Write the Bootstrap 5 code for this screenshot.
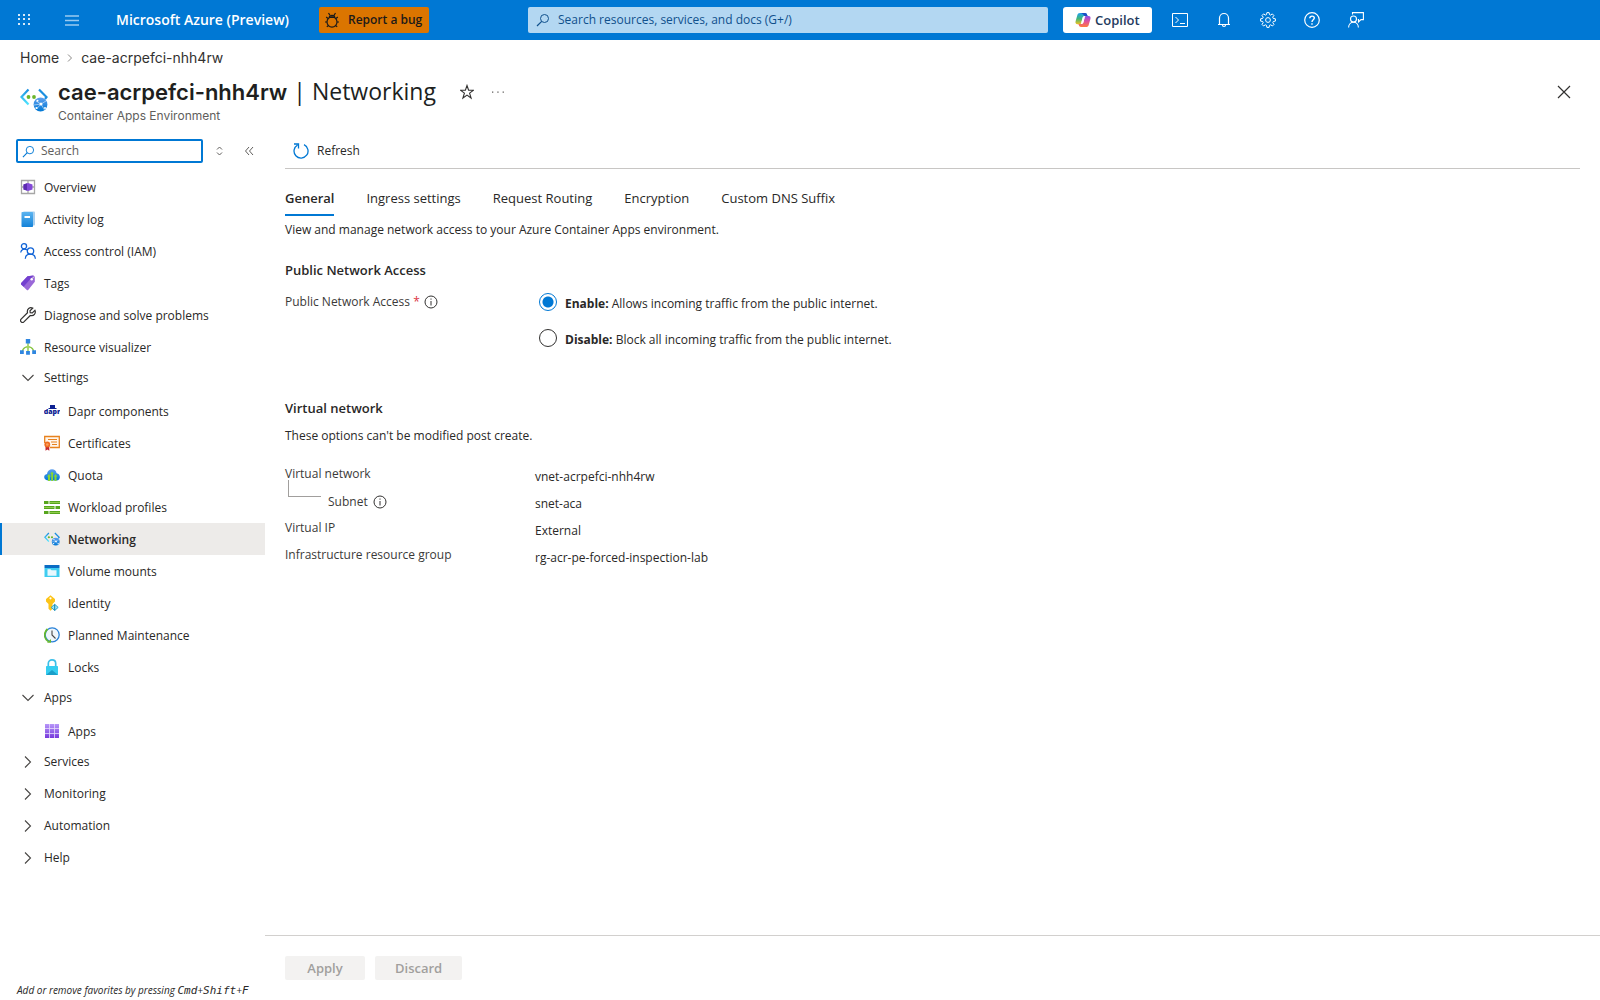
<!DOCTYPE html>
<html lang="en">
<head>
<meta charset="utf-8">
<meta name="viewport" content="width=device-width, initial-scale=1">
<title>cae-acrpefci-nhh4rw | Networking - Microsoft Azure</title>
<link href="https://cdn.jsdelivr.net/npm/bootstrap@5.3.0/dist/css/bootstrap.min.css" rel="stylesheet">
<style>
  body { font-family: "Open Sans", "Noto Sans", sans-serif; font-size: 12px; line-height: 20px; color: #292827; }
  svg { display: block; flex: none; }
  button { color: inherit; }
  .sf { font-family: Inter, "Liberation Sans", sans-serif; }
  .plain { background: none; border: 0; padding: 0; }

  .topbar { background: #0078d4; height: 40px; color: #fff; }
  .topbar-start { flex: 0 0 33%; padding-left: 17px; }
  .brand { font-size: 14px; font-weight: 600; color: #fff; margin-left: 36px; }
  .bug-btn { background: #db7500; color: #1b1a19; font-size: 12px; font-weight: 600; height: 26px; border-radius: 2px; padding: 0 7px 0 5px; margin-left: 30px; gap: 8px; }
  .global-search { flex: 0 0 32.5%; height: 26px; background: #b3d7f2; border-radius: 2px; padding: 0 8px; color: #10508c; gap: 8px; }
  .global-search input, .menu-search input { background: none; border: 0; outline: 0; min-width: 0; padding: 0; }
  .global-search input::placeholder { color: #10508c; opacity: 1; }
  .copilot-btn { background: #fff; color: #243a5e; font-size: 13px; font-weight: 600; height: 26px; border-radius: 3px; padding: 0 12px; gap: 4px; margin-left: 15px; }
  .tool-icons { margin-left: 20px; gap: 28px; }

  .crumbs { padding: 8px 20px 0; font-size: 14px; }
  .crumbs a { color: #323130; text-decoration: none; }
  .blade-head { padding: 7px 29px 0 20px; }
  .blade-title { font-size: 23px; line-height: 32px; font-weight: 400; color: #201f1e; }
  .blade-title b { font-size: 22px; font-weight: 600; }
  .blade-sub { line-height: 16px; color: #605e5c; }
  .title-icon { padding-top: 13px; width: 38px; }

  .side { flex: 0 0 265px; min-width: 0; }
  .menu-tools { height: 24px; margin: 15px 0 8px 16px; }
  .menu-search { width: 187px; height: 24px; border: 2px solid #0078d4; border-radius: 2px; padding: 0 4px; gap: 6px; }
  .menu-search svg { color: #0078d4; }
  .menu-search input::placeholder { color: #605e5c; opacity: 1; }
  .menu { padding: 0; margin: 0; list-style: none; }
  .menu-link { display: flex; align-items: center; gap: 8px; width: 100%; height: 32px; color: #292827; text-decoration: none; padding: 0 0 0 20px; border: 0; background: none; text-align: left; }
  .menu-link span { padding-top: 2px; }
  .menu-link.group { padding-bottom: 2px; }
  .menu-link.group span { padding-top: 0; }
  .menu-sub .menu-link { padding-left: 44px; }
  .menu-sub .menu-link.current { background: #edebe9; border-left: 2px solid #0078d4; padding-left: 42px; font-weight: 600; }
  .fav-hint { font-size: 10px; line-height: 16px; font-style: italic; padding: 0 0 1px 17px; }
  .fav-hint kbd { font-family: "DejaVu Sans Mono", monospace; font-size: 11px; background: none; color: inherit; padding: 0; }

  .content-pad { padding: 0 20px; }
  .cmdbar { border-bottom: 1px solid #c8c6c4; padding: 17px 8px 7px; }
  .pane-tabs { gap: 32px; margin: 0; padding: 15px 0 0; list-style: none; font-size: 13px; }
  .pane-tabs button { display: block; height: 32px; padding: 0 0 3px; border: 0; border-bottom: 2px solid transparent; background: none; }
  .pane-tabs button.active { font-weight: 600; border-bottom-color: #0078d4; }
  .section-h { font-size: 13px; line-height: 20px; font-weight: 600; margin: 0; }
  .section-gap { margin-top: 42px; }
  .field-label { flex: 0 0 254px; color: #3b3a39; }
  .choice { display: flex; align-items: center; gap: 8px; height: 36px; }
  .choice input { appearance: none; width: 18px; height: 18px; margin: 0; border: 1px solid #323130; border-radius: 50%; flex: none; }
  .choice input:checked { border-color: #0078d4; background: radial-gradient(circle, #0078d4 5px, transparent 6px); }
  .choice label { padding-top: 3px; }
  .choice b { font-weight: 700; }
  .props { display: grid; grid-template-columns: 250px auto; grid-auto-rows: 27px; margin: 17px 0 0; }
  .props dt { font-weight: 400; color: #3b3a39; padding-top: 1px; }
  .props dd { margin: 0; padding-top: 4px; }
  .props .nested { display: flex; gap: 5px; align-items: center; height: 22px; position: relative; padding-left: 43px; }
  .props .nested::before { content: ""; position: absolute; left: 3px; top: -10px; width: 33px; height: 17px; border: 1px solid #a19f9d; border-width: 0 0 1px 1px; }
  .foot { border-top: 1px solid #d2d0ce; padding: 20px; height: 65px; gap: 10px; font-size: 13px; }
  .foot button { height: 24px; min-width: 80px; padding: 0 20px; border: 0; border-radius: 2px; background: #f3f2f1; color: #a19f9d; font-weight: 600; }
</style>
</head>
<body class="d-flex flex-column min-vh-100">
<svg width="0" height="0" class="position-absolute" aria-hidden="true">
  <defs>
    <linearGradient id="gBlue" x1="0" y1="0" x2="0" y2="1"><stop offset="0" stop-color="#5ea0ef"/><stop offset="1" stop-color="#0078d4"/></linearGradient>
    <linearGradient id="gBook" x1="0" y1="0" x2="0" y2="1"><stop offset="0" stop-color="#5bb4f0"/><stop offset="1" stop-color="#1482d8"/></linearGradient>
    <linearGradient id="gPurple" x1="0" y1="0" x2="0" y2="1"><stop offset="0" stop-color="#b796f9"/><stop offset="1" stop-color="#773adc"/></linearGradient>
    <linearGradient id="gLeft" x1="0" y1="0" x2="0" y2="1"><stop offset="0" stop-color="#1b8fe0"/><stop offset="1" stop-color="#50e6ff"/></linearGradient>
    <linearGradient id="gCopA" x1="0" y1="0" x2="0" y2="1"><stop offset="0" stop-color="#1fa0f0"/><stop offset=".5" stop-color="#3fb67a"/><stop offset="1" stop-color="#f0c020"/></linearGradient>
    <linearGradient id="gCopB" x1="0" y1="0" x2="0" y2="1"><stop offset="0" stop-color="#8a4fe8"/><stop offset=".5" stop-color="#e0509a"/><stop offset="1" stop-color="#ff7a3c"/></linearGradient>
  </defs>
  <symbol id="i-net" viewBox="0 0 28 24">
    <path d="M8.500 1.500 1.500 9l7 7.500" fill="none" stroke="url(#gLeft)" stroke-width="2.200"/>
    <path d="M19 1.500 26.500 9l-1.500 2" fill="none" stroke="#1b8fe0" stroke-width="2.200"/>
    <circle cx="8.500" cy="9" r="1.900" fill="#6bb52b"/><circle cx="14" cy="9" r="1.900" fill="#6bb52b"/>
    <circle cx="20.500" cy="16.500" r="6.900" fill="url(#gBlue)"/>
    <path d="M16 13l5 3 5-3M21 16l-4.500 5M21 16l3.500 6M14 17l7-1" fill="none" stroke="#fff" stroke-width=".7" opacity=".7"/>
    <circle cx="21" cy="16" r="1.500" fill="#fff"/><circle cx="16.500" cy="20" r="1.100" fill="#fff"/><circle cx="17.500" cy="12.800" r="1" fill="#fff"/><circle cx="25" cy="20" r="1" fill="#fff"/>
  </symbol>
  <symbol id="i-glass" viewBox="0 0 14 14"><circle cx="8.500" cy="5.500" r="4" fill="none" stroke="currentColor"/><path d="M5.700 8.300 1 13" stroke="currentColor" stroke-width="1.200"/></symbol>
  <symbol id="i-down" viewBox="0 0 16 16"><path d="M2.500 5 8 10.500 13.500 5" fill="none" stroke="#484644" stroke-width="1.100"/></symbol>
  <symbol id="i-right" viewBox="0 0 16 16"><path d="M5 2.500 10.500 8 5 13.500" fill="none" stroke="#484644" stroke-width="1.100"/></symbol>
  <symbol id="i-info" viewBox="0 0 14 14"><circle cx="7" cy="7" r="6" fill="none" stroke="#323130"/><path d="M7 6v4.500M7 3.500v1.200" stroke="#323130"/></symbol>
</svg>

<header class="topbar d-flex align-items-center">
  <div class="topbar-start d-flex align-items-center">
    <button class="plain" aria-label="App launcher"><svg width="14" height="14" viewBox="0 0 14 14" fill="#d6e9f8"><path d="M1 1h2v2H1zM6 1h2v2H6zM11 1h2v2h-2zM1 5h2v2H1zM6 5h2v2H6zM11 5h2v2h-2zM1 10h2v2H1zM6 10h2v2H6zM11 10h2v2h-2z"/></svg></button>
    <button class="plain ms-4 ps-2" aria-label="Show portal menu"><svg width="17" height="14" viewBox="0 0 17 14"><path d="M2 3h14M2 7.500h14M2 12h14" stroke="#9bcaf0" stroke-width="1.500"/></svg></button>
    <a class="brand text-decoration-none text-nowrap" href="#">Microsoft Azure (Preview)</a>
    <button class="bug-btn border-0 d-flex align-items-center text-nowrap">
      <svg width="16" height="18" viewBox="0 0 16 18" fill="none" stroke="#1b1a19" stroke-width="1.200"><ellipse cx="8" cy="11" rx="5" ry="5.200"/><path d="M5.300 6.300C5.300 3.800 10.700 3.800 10.700 6.300z"/><path d="M6 4.300 4.500 2M10 4.300 11.500 2M4 7.500 2.200 6M12 7.500 13.800 6M3 11H1M13 11H15M4.500 14.500l-1.700 1.300M11.500 14.500l1.700 1.300"/></svg>
      Report a bug
    </button>
  </div>
  <div class="global-search d-flex align-items-center">
    <svg width="14" height="14"><use href="#i-glass"/></svg>
    <input class="flex-fill" type="search" aria-label="Search resources, services, and docs" placeholder="Search resources, services, and docs (G+/)">
  </div>
  <button class="copilot-btn border-0 d-flex align-items-center">
    <svg width="16" height="16" viewBox="0 0 16 16"><path d="M5 1h5c1.300 0 1.800.8 2.200 2L12.600 4H9.500C8.500 4 8 4.500 7.700 5.500L6.200 11c-.3.900-.8 1.200-1.700 1.200H2.500C.8 12.200.1 10.800.6 9.200l1.700-6C2.700 1.800 3.500 1 5 1z" fill="url(#gCopA)"/><path d="M11 15H6c-1.300 0-1.800-.8-2.200-2l-.4-.9h3.100c1 0 1.500-.5 1.800-1.500l1.500-5.500C10.100 4.200 10.600 4 11.500 4h2c1.700 0 2.400 1.300 1.900 2.900l-1.700 6c-.4 1.300-1.200 2.100-2.700 2.100z" fill="url(#gCopB)"/><path d="M5 1h5c1.300 0 1.800.8 2.200 2L12.600 4H9.500C8.800 2.500 7 1 5 1z" fill="#1c4fc4"/><path d="M7.800 5.300h1.900L8.300 10.800H6.300z" fill="#fff"/></svg>
    Copilot
  </button>
  <div class="tool-icons d-flex align-items-center">
    <button class="plain" aria-label="Cloud Shell"><svg width="16" height="16" viewBox="0 0 16 16" fill="none" stroke="#fff"><path d="M.5 1.500h15v13H.5zM3.500 5l3 3-3 3M8 11.500h5"/></svg></button>
    <button class="plain" aria-label="Notifications"><svg width="16" height="16" viewBox="0 0 16 16" fill="none" stroke="#fff"><path d="M2 12.500h12M3.500 12.500V6a4.500 4.500 0 0 1 9 0v6.500M6.500 13c0 2 3 2 3 0" stroke-width="1.200"/></svg></button>
    <button class="plain" aria-label="Settings"><svg width="16" height="16" viewBox="0 0 16 16" fill="none" stroke="#fff"><path d="M6.900.6h2.200l.4 2 1.100.5 1.700-1.200 1.600 1.600-1.200 1.700.5 1.200 2.200.4v2.300l-2.100.4-.5 1.200 1.200 1.700-1.600 1.600-1.700-1.200-1.200.5-.4 2.100H6.900l-.4-2.100-1.200-.5L3.600 14 2 12.400l1.200-1.700-.5-1.200L.6 9.100V6.800l2.100-.4.5-1.200L2 3.500l1.600-1.600 1.700 1.200 1.200-.5z"/><circle cx="8" cy="8" r="2.400"/></svg></button>
    <button class="plain" aria-label="Help"><svg width="16" height="16" viewBox="0 0 16 16" fill="none" stroke="#fff" stroke-width="1.200"><circle cx="8" cy="8" r="7.300"/><path d="M5.800 6.300c0-3 4.500-2.800 4.500-.2C10.300 7.800 8 7.800 8 10M8 11.300v1.400" stroke-width="1.400"/></svg></button>
    <button class="plain" aria-label="Feedback"><svg width="16" height="16" viewBox="0 0 16 16" fill="none" stroke="#fff" stroke-width="1.100"><circle cx="5.500" cy="7" r="3"/><path d="M.6 15.500c0-7 9.800-7 9.800 0M4.500 2.500V.6h10.900v7H13L10.500 10V7.500H9.800"/></svg></button>
  </div>
</header>

<nav class="crumbs sf d-flex align-items-center" aria-label="Breadcrumb">
  <a href="#">Home</a>
  <svg class="mx-2" width="6" height="8" viewBox="0 0 6 8"><path d="M1 .5 4.500 4 1 7.500" fill="none" stroke="#8a8886"/></svg>
  <a href="#">cae-acrpefci-nhh4rw</a>
</nav>

<div class="blade-head d-flex">
  <div class="title-icon"><svg width="28" height="24"><use href="#i-net"/></svg></div>
  <div class="flex-fill">
    <div class="d-flex align-items-center">
      <h1 class="blade-title m-0 text-nowrap"><b class="sf">cae-acrpefci-nhh4rw</b> | Networking</h1>
      <button class="plain ms-4" aria-label="Add to favorites"><svg width="14" height="16" viewBox="1 0 14 16"><path d="M8 1.500l1.600 4.700h5L10.600 9.100l1.500 4.900L8 11.100 3.900 14l1.500-4.900L1.400 6.200h5z" fill="none" stroke="#323130" stroke-width="1.100"/></svg></button>
      <button class="plain ms-3" aria-label="More"><svg width="16" height="16" viewBox="0 0 16 16" fill="#605e5c"><path d="M2 7.500h1.300v1.300H2zM7.300 7.500h1.300v1.300H7.300zM12.600 7.500h1.300v1.300h-1.300z"/></svg></button>
    </div>
    <div class="blade-sub sf">Container Apps Environment</div>
  </div>
  <button class="plain align-self-start pt-2" aria-label="Close"><svg width="14" height="18" viewBox="0 0 14 18"><path d="M1 3l12 12M13 3 1 15" stroke="#323130" stroke-width="1.200"/></svg></button>
</div>

<div class="d-flex flex-fill">
  <aside class="side d-flex flex-column">
    <div class="menu-tools d-flex align-items-center">
      <div class="menu-search d-flex align-items-center">
        <svg width="13" height="13"><use href="#i-glass"/></svg>
        <input class="flex-fill" type="search" aria-label="Search menu" placeholder="Search">
      </div>
      <button class="plain ms-2 ps-1" aria-label="Expand all"><svg width="9" height="12" viewBox="0 0 9 12" fill="none" stroke="#605e5c"><path d="M2 4.500 4.500 2 7 4.500M2 7.500 4.500 10 7 7.500"/></svg></button>
      <button class="plain ms-3 ps-1" aria-label="Collapse menu"><svg width="10" height="10" viewBox="0 0 10 10" fill="none" stroke="#605e5c"><path d="M5 1 1.500 5 5 9M9 1 5.500 5 9 9"/></svg></button>
    </div>
    <ul class="menu">
      <li><a class="menu-link" href="#"><svg width="16" height="16" viewBox="0 0 16 16"><path d="M1.500 1.500h13v13h-13zM8 1.500v13M1.500 8h13" fill="none" stroke="#a6a6a6" stroke-width="1.300"/><path d="M3.500 5.500 8 4l4.500 1.500v5L8 12l-4.500-1.500z" fill="#8349d8"/><path d="M3.500 5.500 7 4.300v7.300l-3.500-1.100z" fill="#5c2bb0"/></svg><span>Overview</span></a></li>
      <li><a class="menu-link" href="#"><svg width="16" height="16" viewBox="0 0 16 16"><rect x="3" y=".5" width="12" height="14" rx="1" fill="#a9cfee"/><rect x="1.500" y="1" width="11.500" height="15" rx=".8" fill="url(#gBook)"/><path d="M4.500 5h5.500v2H4.500z" fill="#fff"/></svg><span>Activity log</span></a></li>
      <li><a class="menu-link" href="#"><svg width="16" height="16" viewBox="0 0 16 16" fill="none" stroke="#0f62d6" stroke-width="1.300"><circle cx="4" cy="3.300" r="2.600"/><circle cx="10.500" cy="8" r="3.200"/><path d="M.7 9.500C1 6.500 4.500 5 7 7M5.300 15.800c.2-6.300 9.600-6.300 10.100 0"/></svg><span>Access control (IAM)</span></a></li>
      <li><a class="menu-link" href="#"><svg width="16" height="16" viewBox="0 0 16 16"><path d="M7.500 1.300 13.500.5l1.300 1.300v5L8.200 15q-.7.600-1.400 0L1.200 9.500q-.5-.7 0-1.400z" fill="#9a68d8"/><path d="M7.500 1.300 13.500.5 3.500 11.800 1.200 9.500q-.5-.7 0-1.400z" fill="#7340cf"/><circle cx="11.700" cy="4.300" r="1.200" fill="#fff"/><path d="M12.300 3.500l1.500-1.700" stroke="#ddd"/></svg><span>Tags</span></a></li>
      <li><a class="menu-link" href="#"><svg width="16" height="16" viewBox="0 0 16 16"><path d="M14.900 3.300 12.300 5.900 10.200 5.800 10 3.700 12.700 1.100C9.800-.2 6.600 2 7.500 5.700L1.100 12.100c-1.700 1.900.9 4.500 2.800 2.800l6.400-6.400c3.700.9 5.900-2.300 4.600-5.200z" fill="none" stroke="#323130" stroke-width="1.200"/></svg><span>Diagnose and solve problems</span></a></li>
      <li><a class="menu-link" href="#"><svg width="16" height="16" viewBox="0 0 16 16"><path d="M8 4v8M2.500 12C3 8.500 5 8.500 8 7.500c3 1 5 1 5.500 4.500" fill="none" stroke="#86c440" stroke-width="1.300"/><circle cx="8" cy="8" r="1.600" fill="#a4d65e"/><path d="M5.800 0h4.400v4.400H5.800zM0 11.300h3.800v3.800H0zM12.200 11.300H16v3.800h-3.800zM6.100 12h3.800v3.800H6.100z" fill="#2f86e0"/></svg><span>Resource visualizer</span></a></li>
      <li>
        <button class="menu-link group" aria-expanded="true"><svg width="16" height="16"><use href="#i-down"/></svg><span>Settings</span></button>
        <ul class="menu menu-sub">
          <li><a class="menu-link" href="#"><svg width="16" height="16" viewBox="0 0 16 16"><path d="M6 2h5v3H6zM4.500 5h8v1h-8z" fill="#0d2192"/><text x="8" y="11" font-family="Open Sans" font-weight="800" font-size="7" text-anchor="middle" fill="#0d2192">dapr</text></svg><span>Dapr components</span></a></li>
          <li><a class="menu-link" href="#"><svg width="16" height="16" viewBox="0 0 16 16"><path d="M.7 8V1.500h14.600v11H6" fill="#fff6ec" stroke="#e8821e" stroke-width="1.300"/><path d="M4 4.500h9M7 7h6M8 9.500h5" stroke="#e8821e"/><path d="M1.500 11h3.800v4.800l-1.900-1.300-1.900 1.300z" fill="#c4262e"/><circle cx="3.300" cy="9.500" r="2.900" fill="#ef6c20"/><circle cx="3.300" cy="9.500" r="1.300" fill="#f9a35e"/></svg><span>Certificates</span></a></li>
          <li><a class="menu-link" href="#"><svg width="16" height="16" viewBox="0 0 16 16"><path d="M4 13.500C-.8 13.500-1 7.500 3 7 3.500 1 12 .8 12.600 6.200 17 6.500 17 13.500 12.500 13.500z" fill="url(#gBlue)"/><path d="M4 14V9.500H3L5 7l2 2.500H6V14zM7.200 14V7H6.200L8 4.500 9.900 7H9v7zM10.500 14v-4.500h-.8L11.500 7l2 2.500h-1V14z" fill="#86d633"/></svg><span>Quota</span></a></li>
          <li><a class="menu-link" href="#"><svg width="16" height="16" viewBox="0 0 16 16"><path d="M0 2h16v3H0zM0 7h16v3H0zM0 12h16v3H0z" fill="#57a51d"/><path d="M5 2v3M11 7v3M5 12v3" stroke="#fff"/><path d="M6 3.500h10M0 8.500h10M6 13.500h10" stroke="#8fcb4b"/></svg><span>Workload profiles</span></a></li>
          <li><a class="menu-link current" href="#" aria-current="page"><svg width="16" height="16"><use href="#i-net"/></svg><span>Networking</span></a></li>
          <li><a class="menu-link" href="#"><svg width="16" height="16" viewBox="0 0 16 16"><path d="M.5 5h15v9H.5z" fill="#3fcdf0"/><path d="M.5 2h15v3H.5z" fill="#0a6cc4"/><path d="M3.500 6.300h3l1 1h5v5.400h-9z" fill="#e8f8fe"/></svg><span>Volume mounts</span></a></li>
          <li><a class="menu-link" href="#"><svg width="16" height="16" viewBox="0 0 16 16"><path d="M6.500.3 11 4v2.500L8.500 9v5L6.500 15.800 4.500 13.800V9L2 6.500V4z" fill="#fcc419"/><circle cx="6.500" cy="3.300" r="1.100" fill="#fff"/><path d="M10.700 9.300l3.500 3.100-3.500 3.100-3.500-3.100z" fill="#9fe4f7" stroke="#1f9ccc" stroke-width=".9"/><path d="M10.700 9.500v6" stroke="#137fae"/></svg><span>Identity</span></a></li>
          <li><a class="menu-link" href="#"><svg width="16" height="16" viewBox="0 0 16 16"><circle cx="8.200" cy="7.800" r="7" fill="#f0f6fc" stroke="#2a82d8" stroke-width="1.300"/><path d="M3.500 2C-.5 5.500-.5 11.500 4.500 14.600" fill="none" stroke="#66b82e" stroke-width="1.700"/><path d="M3 15.800h4V12z" fill="#66b82e"/><path d="M8 3.500V8l3.500 3.500" fill="none" stroke="#484644" stroke-width="1.100"/></svg><span>Planned Maintenance</span></a></li>
          <li><a class="menu-link" href="#"><svg width="16" height="16" viewBox="0 0 16 16"><path d="M4.300 8V4.500c0-4.800 7.400-4.800 7.400 0V8" fill="none" stroke="#3bbfe8" stroke-width="1.700"/><rect x="2" y="7" width="12" height="9" rx=".6" fill="#35cdf0"/><path d="M2 16l6-5 6 5z" fill="#1a9fc9"/></svg><span>Locks</span></a></li>
        </ul>
      </li>
      <li>
        <button class="menu-link group" aria-expanded="true"><svg width="16" height="16"><use href="#i-down"/></svg><span>Apps</span></button>
        <ul class="menu menu-sub">
          <li><a class="menu-link" href="#"><svg width="16" height="16" viewBox="0 0 16 16"><path d="M1 1h14v14H1z" fill="url(#gPurple)"/><path d="M5.500 1v14M10.500 1v14M1 5.500h14M1 10.500h14" stroke="#e6dafc" stroke-width=".8"/></svg><span>Apps</span></a></li>
        </ul>
      </li>
      <li><button class="menu-link group" aria-expanded="false"><svg width="16" height="16"><use href="#i-right"/></svg><span>Services</span></button></li>
      <li><button class="menu-link group" aria-expanded="false"><svg width="16" height="16"><use href="#i-right"/></svg><span>Monitoring</span></button></li>
      <li><button class="menu-link group" aria-expanded="false"><svg width="16" height="16"><use href="#i-right"/></svg><span>Automation</span></button></li>
      <li><button class="menu-link group" aria-expanded="false"><svg width="16" height="16"><use href="#i-right"/></svg><span>Help</span></button></li>
    </ul>
    <div class="fav-hint mt-auto text-nowrap">Add or remove favorites by pressing <kbd>Cmd</kbd>+<kbd>Shift</kbd>+<kbd>F</kbd></div>
  </aside>

  <main class="flex-fill d-flex flex-column">
    <div class="content-pad flex-fill">
      <div class="cmdbar d-flex align-items-center">
        <button class="plain d-flex align-items-center gap-2"><svg width="16" height="18" viewBox="0 0 16 18" fill="none" stroke="#0078d4" stroke-width="1.300"><path d="M11 2.700A7 7 0 1 1 4.500 3M1 2h4.500v4.500"/></svg>Refresh</button>
      </div>
      <ul class="pane-tabs d-flex" role="tablist">
        <li><button class="active" role="tab" aria-selected="true">General</button></li>
        <li><button role="tab" aria-selected="false">Ingress settings</button></li>
        <li><button role="tab" aria-selected="false">Request Routing</button></li>
        <li><button role="tab" aria-selected="false">Encryption</button></li>
        <li><button role="tab" aria-selected="false">Custom DNS Suffix</button></li>
      </ul>
      <p class="m-0 pt-1">View and manage network access to your Azure Container Apps environment.</p>
      <h2 class="section-h mt-3 pt-1">Public Network Access</h2>
      <fieldset class="d-flex">
        <div class="field-label d-flex align-items-center gap-1 pt-2 align-self-start mt-1"><span>Public Network Access <span class="text-danger">*</span></span><svg width="14" height="14"><use href="#i-info"/></svg></div>
        <div class="pt-1">
          <div class="choice"><input type="radio" name="access" id="acc-on" checked><label for="acc-on"><b>Enable:</b> Allows incoming traffic from the public internet.</label></div>
          <div class="choice"><input type="radio" name="access" id="acc-off"><label for="acc-off"><b>Disable:</b> Block all incoming traffic from the public internet.</label></div>
        </div>
      </fieldset>
      <h2 class="section-h section-gap">Virtual network</h2>
      <p class="m-0 pt-2">These options can't be modified post create.</p>
      <dl class="props">
        <dt>Virtual network</dt><dd>vnet-acrpefci-nhh4rw</dd>
        <dt class="nested">Subnet <svg width="14" height="14"><use href="#i-info"/></svg></dt><dd>snet-aca</dd>
        <dt>Virtual IP</dt><dd>External</dd>
        <dt>Infrastructure resource group</dt><dd>rg-acr-pe-forced-inspection-lab</dd>
      </dl>
    </div>
    <footer class="foot d-flex">
      <button disabled>Apply</button>
      <button disabled>Discard</button>
    </footer>
  </main>
</div>
<script src="https://cdn.jsdelivr.net/npm/bootstrap@5.3.0/dist/js/bootstrap.bundle.min.js"></script>
</body>
</html>
